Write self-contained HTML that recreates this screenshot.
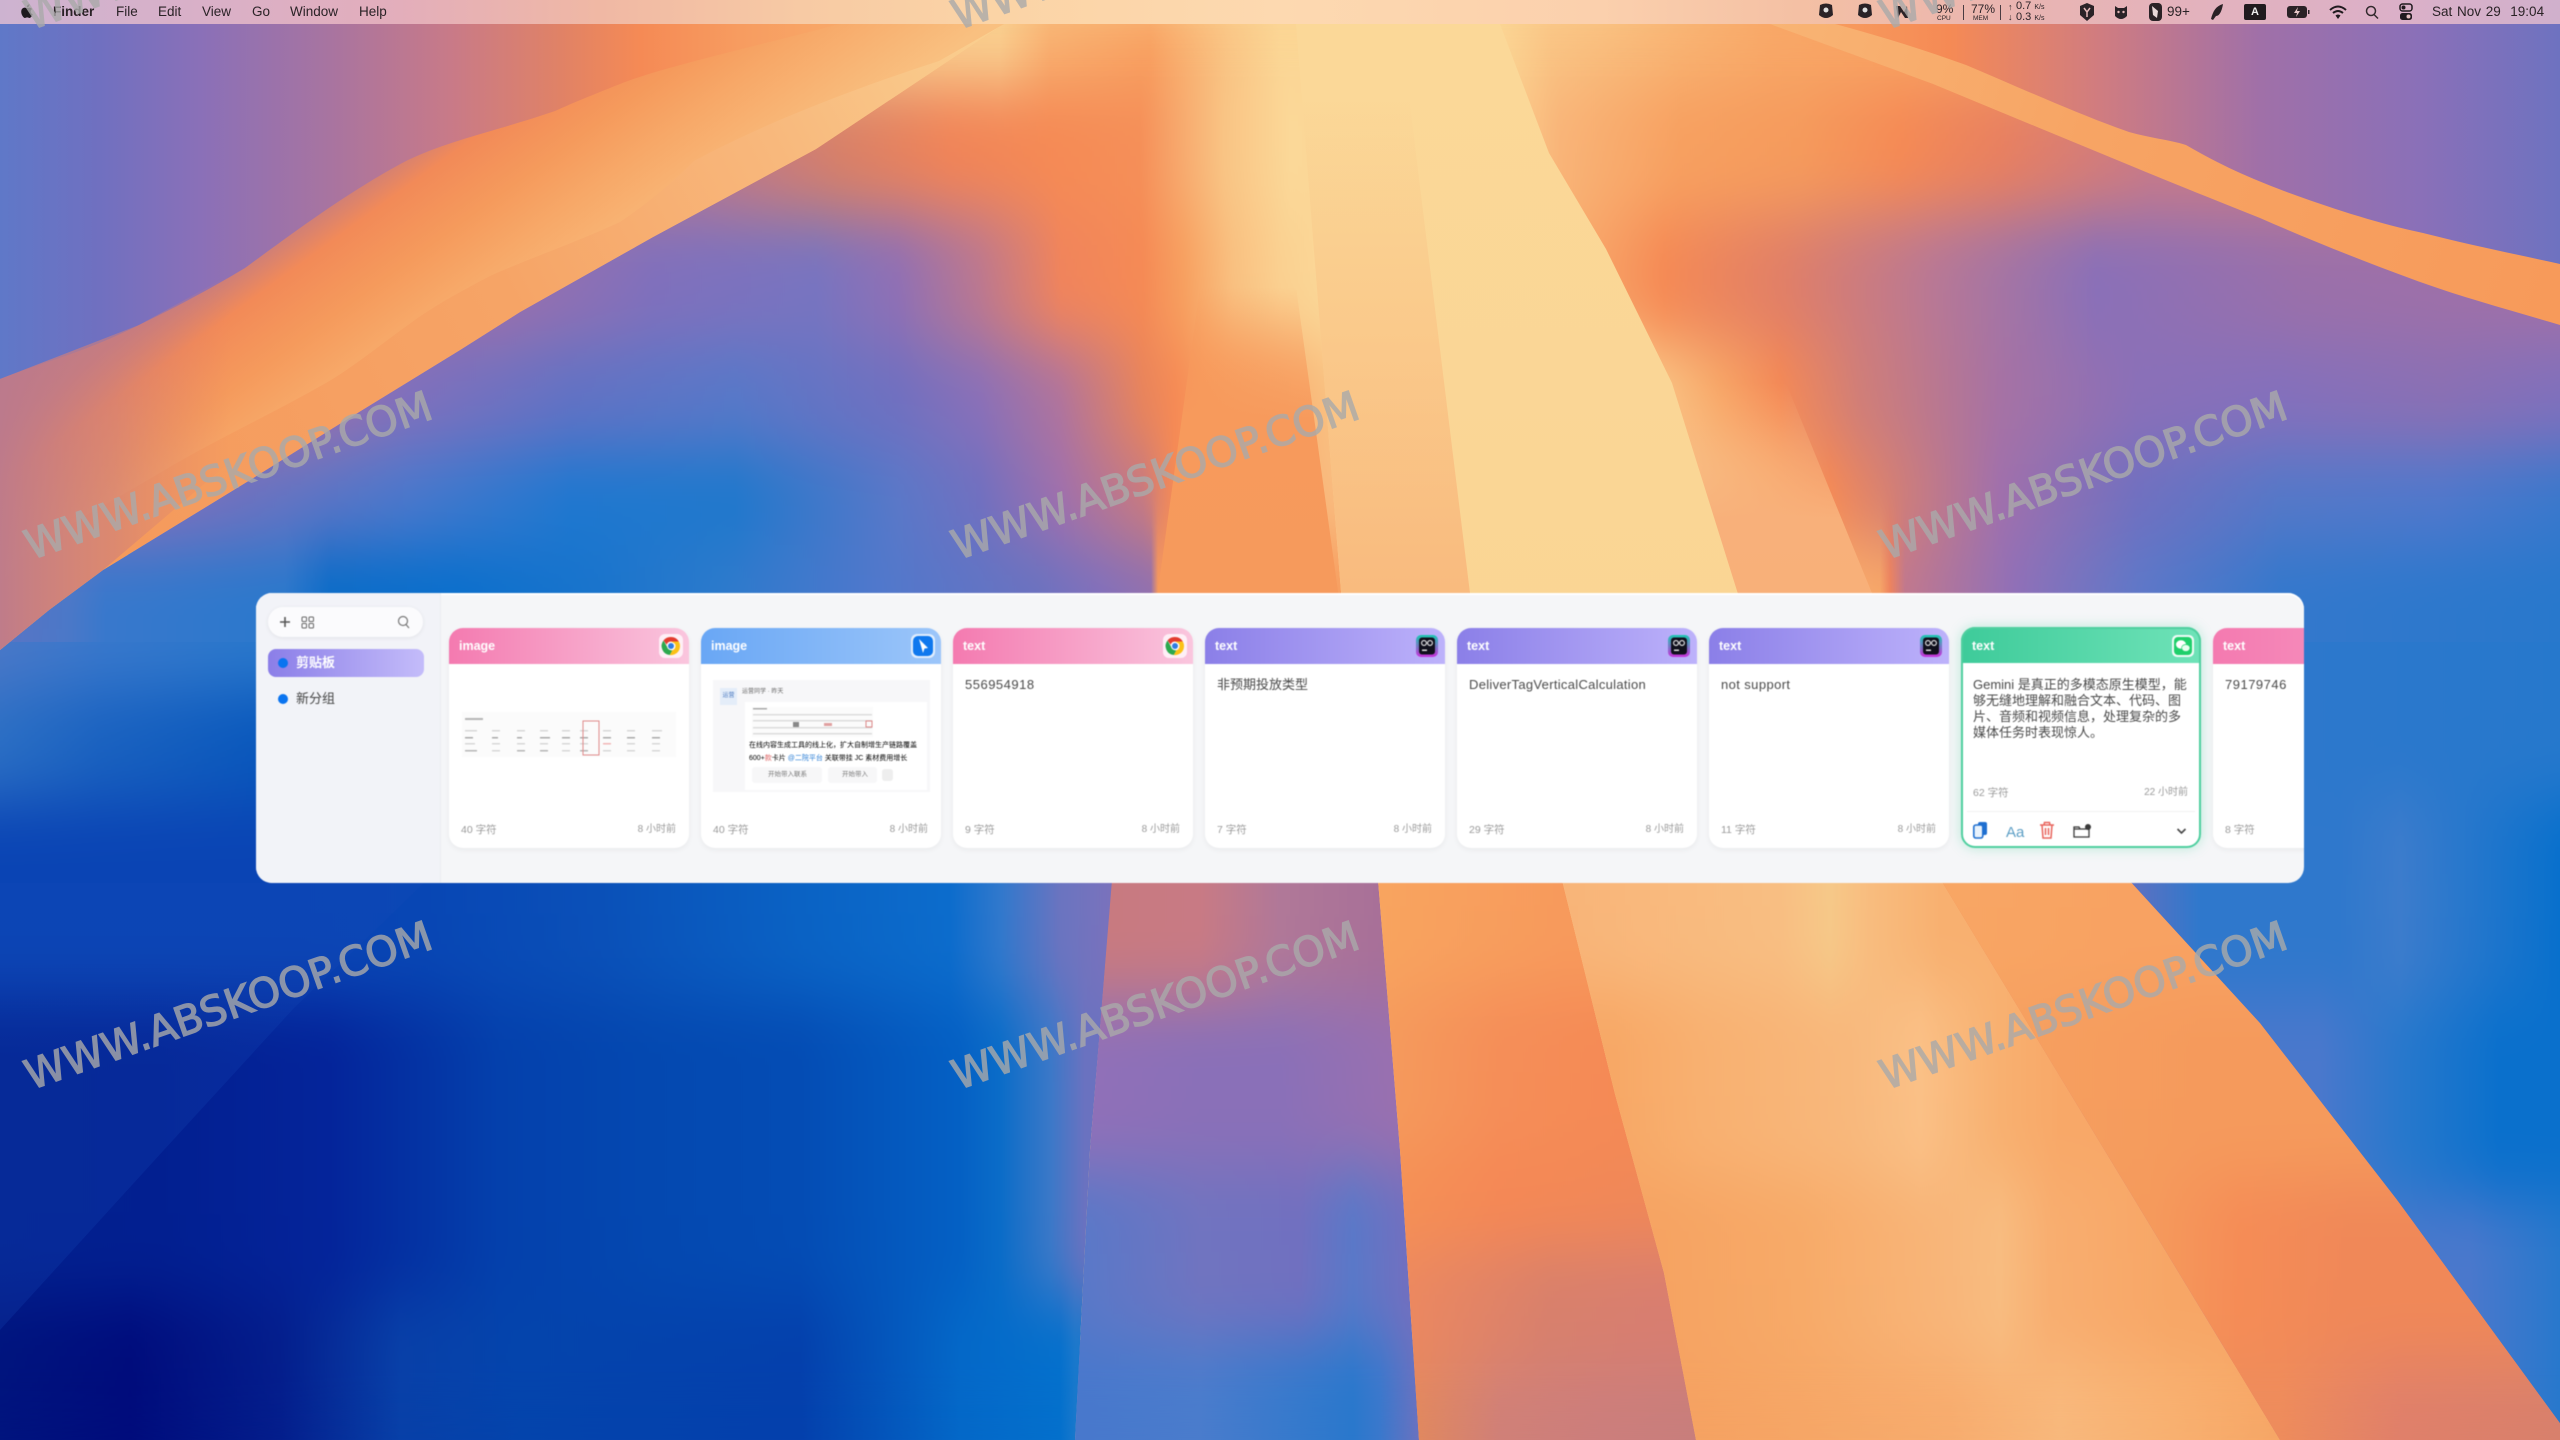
<!DOCTYPE html>
<html><head><meta charset="utf-8"><style>
*{box-sizing:border-box;margin:0;padding:0}
html,body{width:2560px;height:1440px;overflow:hidden;background:#0a50b8;font-family:"Liberation Sans","Noto Sans CJK SC",sans-serif}
#root{position:absolute;left:0;top:0;width:2560px;height:1440px;overflow:hidden}
.l{position:absolute;left:0;top:0;width:2560px;height:1440px;overflow:hidden}
.g{position:absolute;left:0;top:0;width:2560px;height:1440px}
.b1{filter:url(#vb)}
.r{position:absolute;left:0;width:2560px}
.panel{position:absolute;left:256px;top:593px;width:2048px;height:290px;background:#f5f6f8;border-radius:16px;overflow:hidden;box-shadow:inset 0 2px 0 #fff;filter:blur(.4px)}
.side{position:absolute;left:0;top:0;width:185px;height:290px;background:#f2f3f8;border-right:1px solid #eceef2}
.search{position:absolute;left:12px;top:14px;width:155px;height:30px;background:#fbfbfd;border-radius:15px;box-shadow:0 1px 5px rgba(0,0,0,.07)}
.sel{position:absolute;left:12px;top:56px;width:156px;height:28px;border-radius:8px;background:linear-gradient(90deg,#8b7ee8,#c4bcfa)}
.dot{position:absolute;width:10px;height:10px;border-radius:50%;background:#0a74f0}
.nm{position:absolute;left:40px;font-size:13px;line-height:16px}
.card{position:absolute;top:35px;width:240px;height:220px;background:#fff;border-radius:14px;box-shadow:0 2px 6px rgba(0,0,0,.05);overflow:hidden}
.hd{position:absolute;left:0;top:0;width:100%;height:36px;color:#fff;font-weight:bold;font-size:12.5px;line-height:37px;padding-left:10px}
.pk{background:linear-gradient(90deg,#f47ab0,#fac6de)}
.bl{background:linear-gradient(90deg,#69a7f5,#9cc6fa)}
.pu{background:linear-gradient(90deg,#8b7fe8,#bdb2fb)}
.gr{background:linear-gradient(90deg,#3ecb9a,#6fe3b8)}
.ic{position:absolute;left:210px;top:6px;width:24px;height:24px}
.tx{position:absolute;left:12px;top:49px;font-size:13px;line-height:16px;color:#4a4a4a;white-space:nowrap}
.fl,.fr{position:absolute;top:195px;font-size:10.5px;line-height:14px;color:#9a9a9a;white-space:nowrap}
.fl{left:12px}.fr{right:13px;font-size:10px}
.m{position:absolute;top:3px;font-size:13.5px;line-height:18px;color:#2a2226;white-space:nowrap;filter:blur(.35px)}
.mi{position:absolute;top:0;height:24px}
.s{position:absolute;color:#2a2226;white-space:nowrap}
</style></head><body>
<svg width="0" height="0" style="position:absolute"><defs>
<filter id="vb" x="0" y="-10%" width="100%" height="120%" color-interpolation-filters="sRGB"><feGaussianBlur stdDeviation="0 32"/></filter>
</defs></svg>
<div id="root">

<!-- sky -->
<div class="l" style="background:linear-gradient(90deg,#5f78c8 0,#7070c0 100px,#8a70b8 200px,#a874a0 330px,#c87a88 450px,#e08266 560px,#f58a55 640px,#f79c60 740px,#f8a868 840px,#f9c888 1000px,#fad898 1200px,#fad090 1600px,#f8a060 1800px,#f58a55 1950px,#d07c80 2100px,#a070a8 2260px,#8a70b8 2420px,#6e72c0 2560px)"></div>

<!-- fan -->
<div class="l" style="clip-path:polygon(0 650px,49px 610px,103px 570px,250px 480px,333px 428px,460px 350px,520px 312px,653px 237px,816px 149px,1004px 24px,1770px 24px,1933px 84px,2129px 165px,2260px 218px,2423px 283px,2560px 325px,2560px 642px,0 642px)">
<div class="g b1">
<div class="r" style="top:0;height:85px;background:linear-gradient(90deg,#f9d090 1000px,#f8b070 1050px,#f8a060 1150px,#f9c484 1230px,#fbd594 1280px,#fbd594 1500px,#f9c484 1550px,#f8b070 1700px,#f8a868 1770px,#f8a060 2000px)"></div>
<div class="r" style="top:85px;height:130px;background:linear-gradient(90deg,#b87890 700px,#d88068 840px,#f08458 950px,#f58a55 1050px,#f58f58 1140px,#f9c484 1224px,#fbd898 1290px,#fad090 1500px,#f9b478 1560px,#f7a060 1680px,#f59a5c 1800px,#f58a55 1900px,#e88060 2000px,#c87a88 2150px)"></div>
<div class="r" style="top:215px;height:130px;background:linear-gradient(90deg,#9a70ac 500px,#8070bc 653px,#7874c0 816px,#9070b4 898px,#bc788f 980px,#f0845c 1061px,#f58a55 1143px,#f7a060 1184px,#f9c080 1233px,#fad090 1280px,#fbd898 1330px,#fad594 1500px,#f9b070 1560px,#f58a55 1664px,#e07f68 1786px,#b87895 1933px,#8a70b8 2096px,#9a70aa 2300px,#a070a8 2560px)"></div>
<div class="r" style="top:345px;height:105px;background:linear-gradient(90deg,#a070a8 300px,#8070bc 408px,#6272c4 571px,#5878c8 735px,#7070c0 898px,#8a70b8 980px,#b0749c 1061px,#e8845c 1143px,#f58a55 1175px,#f89a5c 1208px,#f8ae70 1280px,#f9c080 1330px,#fbd594 1480px,#fad090 1640px,#f8a868 1720px,#f58a55 1780px,#d07e78 1860px,#a672a4 2000px,#8a70b8 2137px,#8470bc 2280px,#8a70b4 2440px,#8070bc 2560px)"></div>
<div class="r" style="top:450px;height:95px;background:linear-gradient(90deg,#8070bc 150px,#6c72c0 245px,#4a78cc 408px,#1f78d0 571px,#1f78cc 735px,#5a78c8 898px,#7070c0 980px,#a070ac 1061px,#c87a80 1143px,#f58a55 1175px,#f89a5c 1208px,#f8ae70 1280px,#f9b87c 1320px,#fbd594 1480px,#fad090 1700px,#f8b070 1770px,#f58a55 1830px,#d07e78 1900px,#a070ac 2000px,#7070c0 2137px,#5578c8 2280px,#5078cc 2440px,#3a78cc 2560px)"></div>
<div class="r" style="top:545px;height:250px;background:linear-gradient(90deg,#5a74c4 0,#4a78c8 70px,#3878cc 106px,#2a78cc 285px,#0a6cc8 330px,#0a6fcc 457px,#1a74cc 600px,#2c7acc 718px,#5078cc 880px,#6a72c0 1037px,#8070bc 1100px,#9070b0 1151px,#f79a5c 1158px,#f69a5c 1280px,#f79e60 1345px,#f9b87c 1350px,#f9c080 1476px,#fbd594 1480px,#fbd594 1753px,#f8b87c 1760px,#f8a868 1880px,#f0845c 1890px,#c0788f 1905px,#8f70b8 2015px,#5f78c8 2137px,#3478cc 2280px,#2878cc 2560px)"></div>
</div></div>

<!-- crisp centre strips -->
<div class="l" style="clip-path:polygon(1151px 642px,1158px 590px,1200px 287px,1296px 287px,1345px 642px);background:linear-gradient(180deg,rgba(247,154,92,0) 287px,#f79a5c 420px,#f69a5c 642px)"></div>
<div class="l" style="clip-path:polygon(1296px 24px,1345px 642px,1753px 642px,1672px 383px,1606px 249px,1549px 153px,1500px 24px);background:linear-gradient(180deg,#fbd898 24px,#fad594 642px)"></div>
<div class="l" style="clip-path:polygon(1296px 24px,1345px 642px,1476px 642px,1400px 24px);background:linear-gradient(180deg,rgba(249,184,124,0) 100px,#f9b87c 642px)"></div>
<div class="l" style="clip-path:polygon(1672px 383px,1753px 642px,1892px 642px,1786px 383px);background:linear-gradient(180deg,rgba(248,168,104,0) 383px,#f8b07a 520px,#f8b078 642px)"></div>

<!-- bottom left blue -->
<div class="l" style="clip-path:polygon(0 642px,1151px 642px,1112px 885px,1090px 1150px,1075px 1440px,0 1440px)">
<div class="r" style="top:1340px;height:100px;background:linear-gradient(90deg,#00147e 0,#000c7c 130px,#041e8c 280px,#0840a8 400px,#0444ac 520px,#0440ac 800px,#0468c8 960px,#0470cc 1060px,#1878cc 1075px)"></div>
<div class="g b1">
<div class="r" style="top:500px;height:190px;background:linear-gradient(90deg,#4a78c8 0,#3878cc 106px,#2a78cc 256px,#0a58bc 2560px)"></div>
<div class="r" style="top:690px;height:110px;background:linear-gradient(90deg,#2a6ec4 0,#1a62c0 100px,#0a58bc 256px,#0a58bc 2560px)"></div>
<div class="r" style="top:800px;height:200px;background:linear-gradient(90deg,#0a44b4 0,#0a44b4 300px,#0846b4 424px,#0a50b8 600px,#0a62c4 800px,#0c6ccc 950px,#3078cc 1000px,#6a74c0 1060px,#7a72bc 1112px)"></div>
<div class="r" style="top:1000px;height:300px;background:linear-gradient(90deg,#02208e 0,#021f90 160px,#04249a 330px,#0440ac 500px,#0448b0 650px,#044cb4 800px,#0460c4 960px,#0a6cc8 1000px,#3a78c8 1050px,#6a72c0 1085px)"></div>
<div class="r" style="top:1300px;height:140px;background:linear-gradient(90deg,#00147e 0,#000c7c 130px,#041e8c 280px,#0840a8 400px,#0444ac 520px,#0440ac 800px,#0468c8 960px,#0470cc 1060px,#1878cc 1075px)"></div>
</div></div>
<!-- faint diagonal lighter wedge bottom-left -->
<div class="l" style="clip-path:polygon(0 883px,424px 883px,294px 1008px,163px 1151px,0 1330px);background:linear-gradient(180deg,rgba(20,80,190,.2),rgba(20,70,180,.25))"></div>

<!-- pink band -->
<div class="l" style="clip-path:polygon(1112px 880px,1378px 880px,1400px 1150px,1419px 1440px,1075px 1440px,1090px 1150px)">
<div class="r" style="top:1340px;height:100px;background:linear-gradient(90deg,#4878cc 1075px,#4a7ccc 1200px,#2a78cc 1353px,#3a78cc 1380px,#6a72c0 1419px)"></div>
<div class="g b1">
<div class="r" style="top:760px;height:240px;background:linear-gradient(90deg,#c87a80 1112px,#c87a84 1200px,#b07898 1280px,#a87098 1378px)"></div>
<div class="r" style="top:1000px;height:170px;background:linear-gradient(90deg,#9070b8 1090px,#8a70b8 1200px,#8a70b8 1280px,#9870b0 1390px)"></div>
<div class="r" style="top:1170px;height:170px;background:linear-gradient(90deg,#5a78c8 1085px,#7074c0 1200px,#7070c0 1300px,#5a78c8 1353px,#7070c0 1405px)"></div>
<div class="r" style="top:1340px;height:100px;background:linear-gradient(90deg,#4878cc 1075px,#4a7ccc 1200px,#2a78cc 1353px,#3a78cc 1380px,#6a72c0 1419px)"></div>
</div></div>

<!-- orange band -->
<div class="l" style="clip-path:polygon(1378px 880px,1562px 880px,1615px 1094px,1664px 1273px,1696px 1440px,1419px 1440px,1400px 1150px)">
<div class="r" style="top:1370px;height:70px;background:linear-gradient(90deg,#e08860 1419px,#d08078 1500px,#cc7e7c 1600px,#c87e7c 1696px)"></div>
<div class="g b1">
<div class="r" style="top:760px;height:230px;background:linear-gradient(90deg,#f8a45f 1378px,#f79a5c 1562px)"></div>
<div class="r" style="top:990px;height:160px;background:linear-gradient(90deg,#f59a5c 1390px,#f58e58 1500px,#f58a55 1615px)"></div>
<div class="r" style="top:1150px;height:100px;background:linear-gradient(90deg,#f59055 1400px,#f58855 1500px,#f08858 1640px)"></div>
<div class="r" style="top:1250px;height:120px;background:linear-gradient(90deg,#ec8860 1405px,#d8806c 1550px,#d87e70 1660px)"></div>
<div class="r" style="top:1370px;height:70px;background:linear-gradient(90deg,#e08860 1419px,#d08078 1500px,#cc7e7c 1600px,#c87e7c 1696px)"></div>
</div></div>

<!-- peach band -->
<div class="l" style="clip-path:polygon(1562px 880px,1941px 880px,2280px 1440px,1696px 1440px,1664px 1273px,1615px 1094px)">
<div class="r" style="top:1360px;height:80px;background:linear-gradient(90deg,#f5a262 1696px,#f6a666 1800px,#f7ac6e 1950px,#f8b87c 2060px,#f8b070 2175px,#f6a666 2280px)"></div>
<div class="g b1">
<div class="r" style="top:760px;height:230px;background:linear-gradient(90deg,#f8b478 1562px,#f9b87c 1640px,#f8be82 1780px,#f6c888 1830px,#f8bc7e 1870px,#f8b070 1941px)"></div>
<div class="r" style="top:990px;height:190px;background:linear-gradient(90deg,#f7a866 1615px,#f8b070 1700px,#f8b87c 1850px,#fac086 1920px,#f8b070 2000px,#f8a868 2060px)"></div>
<div class="r" style="top:1180px;height:180px;background:linear-gradient(90deg,#f6a362 1664px,#f7aa68 1800px,#f8b67a 1950px,#f8bc80 2000px,#f8ae70 2050px,#f7a666 2170px)"></div>
<div class="r" style="top:1360px;height:80px;background:linear-gradient(90deg,#f5a262 1696px,#f6a666 1800px,#f7ac6e 1950px,#f8b87c 2060px,#f8b070 2175px,#f6a666 2280px)"></div>
</div></div>

<!-- orange 3 -->
<div class="l" style="clip-path:polygon(1941px 880px,2129px 880px,2260px 1023px,2398px 1201px,2560px 1423px,2560px 1440px,2280px 1440px)">
<div class="r" style="top:1360px;height:80px;background:linear-gradient(90deg,#ee8c5c 2280px,#e0806a 2400px,#d8806c 2560px)"></div>
<div class="g b1">
<div class="r" style="top:760px;height:230px;background:linear-gradient(90deg,#f8a664 1941px,#f8a262 2129px)"></div>
<div class="r" style="top:990px;height:190px;background:linear-gradient(90deg,#f6a060 2000px,#f59a5c 2200px)"></div>
<div class="r" style="top:1180px;height:180px;background:linear-gradient(90deg,#f59a5c 2150px,#f58c56 2240px,#f08858 2350px)"></div>
<div class="r" style="top:1360px;height:80px;background:linear-gradient(90deg,#ee8c5c 2280px,#e0806a 2400px,#d8806c 2560px)"></div>
</div></div>

<!-- right blue -->
<div class="l" style="clip-path:polygon(2000px 642px,2560px 642px,2560px 1423px,2398px 1201px,2260px 1023px,2129px 880px,2000px 700px)">
<div class="r" style="top:1200px;height:240px;background:linear-gradient(90deg,#4a78cc 2470px,#2878cc 2560px)"></div>
<div class="g b1">
<div class="r" style="top:500px;height:300px;background:linear-gradient(90deg,#2d78cc 2304px,#2678cc 2560px)"></div>
<div class="r" style="top:800px;height:200px;background:linear-gradient(90deg,#6070c0 2129px,#2f78cc 2200px,#2f78cc 2340px,#3c7ccc 2400px,#0870cc 2560px)"></div>
<div class="r" style="top:1000px;height:200px;background:linear-gradient(90deg,#4a78cc 2320px,#2878cc 2400px,#0a70cc 2500px,#0a70cc 2560px)"></div>
<div class="r" style="top:1200px;height:240px;background:linear-gradient(90deg,#4a78cc 2470px,#2878cc 2560px)"></div>
</div></div>

<!-- ridge and ribbon -->
<svg class="l" viewBox="0 0 2560 1440">
<defs>
<linearGradient id="a1" gradientUnits="userSpaceOnUse" x1="180" y1="247" x2="354" y2="486">
<stop offset="0" stop-color="#a87598"/><stop offset=".136" stop-color="#c07a84"/><stop offset=".288" stop-color="#f28a58"/><stop offset=".49" stop-color="#f59a5c"/><stop offset=".66" stop-color="#f7a868"/><stop offset="1" stop-color="#f9c080"/>
</linearGradient>
<linearGradient id="a2" gradientUnits="userSpaceOnUse" x1="100" y1="500" x2="1000" y2="30">
<stop offset="0" stop-color="#f59a5c"/><stop offset=".45" stop-color="#f6a466"/><stop offset=".75" stop-color="#f8b87c"/><stop offset="1" stop-color="#fad090"/>
</linearGradient>
<linearGradient id="rb" gradientUnits="userSpaceOnUse" x1="1770" y1="24" x2="2560" y2="300">
<stop offset="0" stop-color="#f8b474"/><stop offset=".4" stop-color="#f7a464"/><stop offset="1" stop-color="#f79a5a"/>
</linearGradient>
<linearGradient id="lf" gradientUnits="userSpaceOnUse" x1="0" y1="0" x2="230" y2="0">
<stop offset="0" stop-color="#bc7a8c" stop-opacity=".95"/><stop offset=".5" stop-color="#cc7e7c" stop-opacity=".6"/><stop offset="1" stop-color="#e08068" stop-opacity="0"/>
</linearGradient>
</defs>
<path fill="url(#a1)" d="M840 24 C740 50 660 68 620 84 C590 96 575 102 555 111 C500 130 450 140 408 160 C350 190 290 235 245 268 C205 292 170 310 139 325 C90 350 45 362 0 379 L0 650 L49 610 L103 570 L250 480 L333 428 L460 350 L520 312 L653 237 L816 149 L1004 24Z"/>
<path fill="url(#a2)" d="M1004 24 L939 61 C850 90 760 125 694 161 C670 185 645 205 620 222 C570 245 530 258 490 276 C460 292 435 305 408 325 C380 345 352 368 326 383 C270 415 215 440 163 471 C115 500 65 525 24 555 L0 585 L0 650 L49 610 L103 570 L250 480 L333 428 L460 350 L520 312 L653 237 L816 149 Z"/>
<path fill="url(#lf)" d="M0 379 L139 325 L230 275 L230 462 L103 570 L49 610 L0 650Z"/>
<path fill="url(#rb)" d="M1770 24 L1835 24 C1880 36 1925 50 1966 65 C2025 90 2080 115 2129 132 C2150 138 2170 140 2186 145 C2220 165 2250 178 2284 191 C2330 208 2380 224 2423 233 C2470 245 2515 254 2560 264 L2560 325 C2510 310 2465 298 2423 283 C2365 262 2310 240 2260 218 C2215 200 2170 182 2129 165 L1933 84Z"/>
</svg>

<!-- menu bar -->
<div class="l" style="height:24px;background:linear-gradient(90deg,#cdb3d0 0,#d9b0c8 200px,#e3aebb 400px,#f0b8a4 600px,#f7caa4 800px,#fbd4a6 1000px,#fdd9b0 1280px,#fbd0ad 1600px,#f4c0a4 1800px,#eab5b0 2000px,#e3b2bd 2200px,#dbb0c8 2400px,#d0b0cc 2560px)"></div>
<svg class="mi" style="left:18px;width:18px" viewBox="0 0 18 24"><path fill="#1e1a1e" d="M12.6 11.6c0-1.7 1.4-2.5 1.5-2.6-.8-1.2-2.1-1.3-2.5-1.4-1.1-.1-2.1.6-2.6.6s-1.400-.6-2.300-.6c-1.200 0-2.300.7-2.900 1.700-1.200 2.100-.3 5.300.9 7 .6.8 1.300 1.800 2.200 1.700.9 0 1.200-.6 2.300-.6s1.400.6 2.300.6c1 0 1.600-.9 2.200-1.700.7-1 1-1.900 1-2-.1 0-2-.8-2.100-2.700zM10.800 6.500c.5-.6.800-1.400.7-2.200-.7 0-1.500.5-2 1-.4.5-.8 1.300-.7 2.100.8.100 1.500-.4 2-.9z"/></svg>
<div class="m" style="left:53px;font-weight:bold">Finder</div>
<div class="m" style="left:116px">File</div>
<div class="m" style="left:158px">Edit</div>
<div class="m" style="left:202px">View</div>
<div class="m" style="left:252px">Go</div>
<div class="m" style="left:290px">Window</div>
<div class="m" style="left:359px">Help</div>

<svg class="mi" style="left:1815px;width:100px" viewBox="0 0 100 24">
<path fill="#2a2226" d="M5 5q6-3 12 0l1 10q-7 6-14 0z"/><circle cx="11" cy="10" r="2.500" fill="#ddd"/>
<path fill="#2a2226" d="M44 5q6-3 12 0l1 10q-7 6-14 0z"/><circle cx="50" cy="10" r="2.500" fill="#ddd"/>
<path fill="#2a2226" d="M81 6l4 0 4 6 3-6 1 12-3 0-4-6-3 6z"/>
</svg>
<div class="s" style="left:1936px;top:3px;font-size:12px;line-height:12px">9%</div>
<div class="s" style="left:1937px;top:15px;font-size:6.500px;line-height:8px">CPU</div>
<div class="mi" style="left:1963px;top:5px;height:15px;width:1px;background:#4a3c42"></div>
<div class="s" style="left:1971px;top:3px;font-size:12px;line-height:12px">77%</div>
<div class="s" style="left:1973px;top:15px;font-size:6.500px;line-height:8px">MEM</div>
<div class="mi" style="left:2000px;top:5px;height:15px;width:1px;background:#4a3c42"></div>
<div class="s" style="left:2008px;top:2px;font-size:9px;line-height:10px">↑</div>
<div class="s" style="left:2008px;top:12px;font-size:9px;line-height:10px">↓</div>
<div class="s" style="left:2016px;top:1px;font-size:11px;line-height:11px">0.7 <span style="font-size:7px">K/s</span></div>
<div class="s" style="left:2016px;top:12px;font-size:11px;line-height:11px">0.3 <span style="font-size:7px">K/s</span></div>

<svg class="mi" style="left:2075px;width:130px" viewBox="0 0 130 24">
<path fill="#2a2226" d="M12 3l7 3v9l-7 6-7-6V6z"/><path fill="none" stroke="#e5b8b8" stroke-width="1.500" d="M9 8l3 4 3-4M12 12v5"/>
<path fill="#2a2226" d="M40 6l3 2h6l3-2v10q-6 6-12 0z"/><circle cx="43.500" cy="12" r="1.200" fill="#e5b8b8"/><circle cx="48.500" cy="12" r="1.200" fill="#e5b8b8"/>
<rect x="74" y="3" width="13" height="18" rx="4" fill="#2a2226"/><path fill="#e8d8d8" d="M77 6l6 5-1 7-4-3z"/>
</svg>
<div class="s" style="left:2167px;top:3px;font-size:13.500px;line-height:18px">99+</div>
<svg class="mi" style="left:2207px;width:20px" viewBox="0 0 20 24"><path fill="#2a2226" d="M16 4C9 6 6 11 4 19l2 1 3-4c4 0 6-6 7-12z"/></svg>
<div class="s" style="left:2244px;top:4px;width:22px;height:16px;background:#201a1e;border-radius:2px;color:#eee;font-size:11px;line-height:16px;text-align:center;font-weight:bold">A</div>
<svg class="mi" style="left:2285px;width:26px" viewBox="0 0 26 24"><rect x="2" y="6" width="20" height="12" rx="3" fill="#2a2226"/><rect x="23" y="10" width="1.500" height="4" fill="#2a2226"/><path fill="#e8c8c8" d="M13 7l-4 6h3l-1 4 4-6h-3z"/></svg>
<svg class="mi" style="left:2328px;width:20px" viewBox="0 0 20 24"><path fill="none" stroke="#201a1e" stroke-width="2" d="M2 10q8-7 16 0M5 13q5-4 10 0"/><path fill="#201a1e" d="M7.500 15.500q2.500-2 5 0L10 19z"/></svg>
<svg class="mi" style="left:2364px;width:16px" viewBox="0 0 16 24"><circle cx="7" cy="11" r="4.500" fill="none" stroke="#332a2e" stroke-width="1.500"/><path stroke="#332a2e" stroke-width="1.500" d="M10 14.500l4 4"/></svg>
<svg class="mi" style="left:2398px;width:16px" viewBox="0 0 16 24"><rect x="2" y="4" width="12" height="7" rx="2.500" fill="none" stroke="#201a1e" stroke-width="1.500"/><circle cx="5.500" cy="7.500" r="2" fill="#201a1e"/><rect x="2" y="13" width="12" height="7" rx="2.500" fill="#201a1e"/><circle cx="10.500" cy="16.500" r="2" fill="#e5c0c0"/></svg>
<div class="m" style="left:2432px;word-spacing:1px">Sat Nov 29&nbsp; 19:04</div>

<!-- watermarks -->
<svg class="l" viewBox="0 0 2560 1440" style="font-family:'DejaVu Sans',sans-serif;font-size:41px;fill:#aaa;stroke:#aaa;stroke-width:1.300;opacity:.8">
<text transform="translate(31 30) rotate(-19.400)">WWW.ABSKOOP.COM</text>
<text transform="translate(958 30) rotate(-19.400)">WWW.ABSKOOP.COM</text>
<text transform="translate(1886 30) rotate(-19.400)">WWW.ABSKOOP.COM</text>
<text transform="translate(31 560) rotate(-19.400)">WWW.ABSKOOP.COM</text>
<text transform="translate(958 560) rotate(-19.400)">WWW.ABSKOOP.COM</text>
<text transform="translate(1886 560) rotate(-19.400)">WWW.ABSKOOP.COM</text>
<text transform="translate(31 1090) rotate(-19.400)">WWW.ABSKOOP.COM</text>
<text transform="translate(958 1090) rotate(-19.400)">WWW.ABSKOOP.COM</text>
<text transform="translate(1886 1090) rotate(-19.400)">WWW.ABSKOOP.COM</text>
</svg>

<!-- panel -->
<div class="panel">
<div class="side">
<div class="search"></div>
<svg style="position:absolute;left:20px;top:20px" width="140" height="18" viewBox="0 0 140 18">
<path stroke="#555" stroke-width="1.600" d="M9 4v10M4 9h10"/>
<g fill="none" stroke="#666" stroke-width="1"><rect x="26" y="4" width="4.500" height="4.500" rx="1"/><rect x="33" y="4" width="4.500" height="4.500" rx="1"/><rect x="26" y="10.500" width="4.500" height="4.500" rx="1"/><rect x="33" y="10.500" width="4.500" height="4.500" rx="1"/></g>
<circle cx="127" cy="8" r="4.500" fill="none" stroke="#777" stroke-width="1.200"/><path stroke="#777" stroke-width="1.200" d="M130 11.500l3 3.500"/>
</svg>
<div class="sel"></div>
<div class="dot" style="left:22px;top:65px"></div>
<div class="nm" style="top:62px;color:#fff;font-weight:bold">剪贴板</div>
<div class="dot" style="left:22px;top:101px"></div>
<div class="nm" style="top:98px;color:#444">新分组</div>
</div>

<!-- card 1 -->
<div class="card" style="left:193px">
<div class="hd pk">image</div>
<svg class="ic" viewBox="0 0 24 24"><rect width="24" height="24" rx="6" fill="#fff" fill-opacity=".75"/><path fill="#e33b2e" d="M12 3a9 9 0 0 1 7.800 4.500H12a4.500 4.500 0 0 0-4.300 3.100L4.500 6.500A9 9 0 0 1 12 3z"/><path fill="#2da94f" d="M4.500 6.500l3.900 6.700a4.500 4.500 0 0 0 5 3.100L10.800 21A9 9 0 0 1 4.500 6.500z"/><path fill="#fbc116" d="M19.800 7.500A9 9 0 0 1 10.800 21l2.600-4.700A4.500 4.500 0 0 0 15.900 9.700L12 7.500z"/><circle cx="12" cy="12" r="4" fill="#fff"/><circle cx="12" cy="12" r="3" fill="#2f7de1"/></svg>
<svg style="position:absolute;left:13px;top:84px" width="214" height="45" viewBox="0 0 214 45">
<rect width="214" height="45" fill="#fbfbfb"/>
<g opacity=".7">
<rect x="3" y="6" width="18" height="2" fill="#999"/>
<g fill="#c9c9c9"><rect x="3" y="18" width="12" height="1.500"/><rect x="3" y="25" width="8" height="1.500" fill="#888"/><rect x="3" y="31" width="10" height="1.500"/><rect x="3" y="38" width="12" height="1.500" fill="#999"/>
<rect x="30" y="18" width="8" height="1.500"/><rect x="30" y="25" width="6" height="1.500" fill="#888"/><rect x="30" y="31" width="8" height="1.500"/><rect x="30" y="38" width="8" height="1.500"/>
<rect x="55" y="18" width="8" height="1.500"/><rect x="55" y="25" width="5" height="1.500" fill="#888"/><rect x="55" y="31" width="8" height="1.500"/><rect x="55" y="38" width="8" height="1.500" fill="#999"/>
<rect x="78" y="18" width="8" height="1.500"/><rect x="78" y="25" width="10" height="1.500" fill="#888"/><rect x="78" y="31" width="8" height="1.500"/><rect x="78" y="38" width="8" height="1.500" fill="#999"/>
<rect x="100" y="18" width="8" height="1.500"/><rect x="100" y="25" width="8" height="1.500" fill="#888"/><rect x="100" y="31" width="8" height="1.500"/><rect x="100" y="38" width="8" height="1.500"/>
<rect x="118" y="18" width="8" height="1.500"/><rect x="118" y="25" width="8" height="1.500" fill="#888"/><rect x="118" y="31" width="8" height="1.500"/><rect x="118" y="38" width="8" height="1.500" fill="#999"/>
<rect x="141" y="18" width="8" height="1.500"/><rect x="141" y="25" width="8" height="1.500" fill="#888"/><rect x="141" y="31" width="8" height="1.500" fill="#e99"/><rect x="141" y="38" width="8" height="1.500"/>
<rect x="165" y="18" width="8" height="1.500"/><rect x="165" y="25" width="8" height="1.500" fill="#888"/><rect x="165" y="31" width="8" height="1.500"/><rect x="165" y="38" width="8" height="1.500"/>
<rect x="190" y="18" width="10" height="1.500"/><rect x="190" y="25" width="8" height="1.500" fill="#888"/><rect x="190" y="31" width="8" height="1.500"/><rect x="190" y="38" width="8" height="1.500"/></g>
</g>
<rect x="121" y="9" width="16" height="34" fill="none" stroke="#e08a8a" stroke-width="1"/>
</svg>
<div class="fl">40 字符</div><div class="fr">8 小时前</div>
</div>

<!-- card 2 -->
<div class="card" style="left:445px">
<div class="hd bl">image</div>
<svg class="ic" viewBox="0 0 24 24"><rect width="24" height="24" rx="6" fill="#fff" fill-opacity=".7"/><rect x="2" y="2" width="20" height="20" rx="5" fill="#0f78ee"/><path fill="#fff" d="M8 5l9 9-3.500.5L12 19z"/></svg>
<div style="position:absolute;left:12px;top:52px;width:217px;height:112px;background:#f7f7f9"></div>
<div style="position:absolute;left:44px;top:74px;width:182px;height:88px;background:#fff"></div>
<div style="position:absolute;left:19px;top:60px;width:17px;height:17px;background:#e4edf9;color:#4a78c0;font-size:6px;line-height:17px;text-align:center">运营</div>
<div style="position:absolute;left:41px;top:60px;font-size:6px;line-height:8px;color:#666;white-space:nowrap">运营同学 · 昨天</div>
<svg style="position:absolute;left:51px;top:79px" width="121" height="30" viewBox="0 0 121 30"><rect width="121" height="30" fill="#fbfbfb"/><rect x="1" y="1" width="14" height="1.500" fill="#aaa"/><g fill="#ddd"><rect x="1" y="7" width="119" height="1.500"/><rect x="1" y="13" width="119" height="1.500"/><rect x="1" y="20" width="119" height="1.500"/><rect x="1" y="26" width="119" height="1.500"/></g><rect x="41" y="15" width="6" height="5" fill="#888"/><rect x="72" y="16" width="8" height="3" fill="#e0a0a0"/><rect x="114" y="14" width="6" height="6" fill="none" stroke="#d88" stroke-width="1"/></svg>
<div style="position:absolute;left:48px;top:112px;font-size:7px;line-height:12.500px;color:#000;white-space:nowrap">在线内容生成工具的线上化，扩大自制增生产链路覆盖<br>600+<span style="color:#d66">款</span>卡片 <span style="color:#2c7fd6">@二院平台</span> 关联带挂 JC 素材费用增长</div>
<div style="position:absolute;left:51px;top:139px;width:70px;height:16px;background:#f7f7f8;border-radius:3px;font-size:6.500px;line-height:16px;color:#777;padding-left:16px;white-space:nowrap">开始带入联系</div>
<div style="position:absolute;left:127px;top:139px;width:49px;height:16px;background:#f7f7f8;border-radius:3px;font-size:6.500px;line-height:16px;color:#777;padding-left:14px;white-space:nowrap">开始带入</div>
<div style="position:absolute;left:181px;top:141px;width:11px;height:12px;background:#eee;border-radius:3px"></div>
<div class="fl">40 字符</div><div class="fr">8 小时前</div>
</div>

<!-- card 3 -->
<div class="card" style="left:697px">
<div class="hd pk">text</div>
<svg class="ic" viewBox="0 0 24 24"><rect width="24" height="24" rx="6" fill="#fff" fill-opacity=".75"/><path fill="#e33b2e" d="M12 3a9 9 0 0 1 7.800 4.500H12a4.500 4.500 0 0 0-4.300 3.100L4.500 6.500A9 9 0 0 1 12 3z"/><path fill="#2da94f" d="M4.500 6.500l3.900 6.700a4.500 4.500 0 0 0 5 3.100L10.800 21A9 9 0 0 1 4.500 6.500z"/><path fill="#fbc116" d="M19.800 7.500A9 9 0 0 1 10.800 21l2.600-4.700A4.500 4.500 0 0 0 15.900 9.700L12 7.500z"/><circle cx="12" cy="12" r="4" fill="#fff"/><circle cx="12" cy="12" r="3" fill="#2f7de1"/></svg>
<div class="tx" style="letter-spacing:.5px">556954918</div>
<div class="fl">9 字符</div><div class="fr">8 小时前</div>
</div>

<!-- card 4 -->
<div class="card" style="left:949px">
<div class="hd pu">text</div>
<svg class="ic" viewBox="0 0 24 24"><defs><linearGradient id="jb" x1="0" y1="0" x2="0" y2="1"><stop offset="0" stop-color="#19c9b0"/><stop offset="1" stop-color="#c92fd8"/></linearGradient></defs><rect x="1" y="1" width="22" height="22" rx="5" fill="url(#jb)"/><rect x="4" y="3.500" width="16" height="17" rx="3" fill="#10101c"/><circle cx="9" cy="9" r="2.400" fill="none" stroke="#eee" stroke-width="1.100"/><circle cx="15" cy="9" r="2.400" fill="none" stroke="#eee" stroke-width="1.100"/><rect x="7" y="15.500" width="5" height="1.500" fill="#ddd"/></svg>
<div class="tx">非预期投放类型</div>
<div class="fl">7 字符</div><div class="fr">8 小时前</div>
</div>

<!-- card 5 -->
<div class="card" style="left:1201px">
<div class="hd pu">text</div>
<svg class="ic" viewBox="0 0 24 24"><rect x="1" y="1" width="22" height="22" rx="5" fill="url(#jb)"/><rect x="4" y="3.500" width="16" height="17" rx="3" fill="#10101c"/><circle cx="9" cy="9" r="2.400" fill="none" stroke="#eee" stroke-width="1.100"/><circle cx="15" cy="9" r="2.400" fill="none" stroke="#eee" stroke-width="1.100"/><rect x="7" y="15.500" width="5" height="1.500" fill="#ddd"/></svg>
<div class="tx" style="letter-spacing:.3px">DeliverTagVerticalCalculation</div>
<div class="fl">29 字符</div><div class="fr">8 小时前</div>
</div>

<!-- card 6 -->
<div class="card" style="left:1453px">
<div class="hd pu">text</div>
<svg class="ic" viewBox="0 0 24 24"><rect x="1" y="1" width="22" height="22" rx="5" fill="url(#jb)"/><rect x="4" y="3.500" width="16" height="17" rx="3" fill="#10101c"/><circle cx="9" cy="9" r="2.400" fill="none" stroke="#eee" stroke-width="1.100"/><circle cx="15" cy="9" r="2.400" fill="none" stroke="#eee" stroke-width="1.100"/><rect x="7" y="15.500" width="5" height="1.500" fill="#ddd"/></svg>
<div class="tx" style="letter-spacing:.4px">not support</div>
<div class="fl">11 字符</div><div class="fr">8 小时前</div>
</div>

<!-- card 7 selected -->
<div class="card" style="left:1705px;top:34px;width:240px;height:221px;overflow:visible;background:transparent;box-shadow:0 0 12px rgba(70,205,155,.35)">
<div style="position:absolute;inset:0;background:#fff;border-radius:14px;overflow:hidden">
<div class="hd gr" style="padding-left:11px;line-height:39px">text</div>
<svg class="ic" viewBox="0 0 24 24" style="top:7px"><rect x="1" y="1" width="22" height="22" rx="5" fill="#fff" fill-opacity=".9"/><rect x="3" y="3" width="18" height="18" rx="4" fill="#1fcf6b"/><ellipse cx="10" cy="10.500" rx="5" ry="4.200" fill="#fff"/><ellipse cx="14.800" cy="14" rx="4.200" ry="3.500" fill="#e8fff0" stroke="#1fcf6b" stroke-width=".7"/></svg>
<div class="tx" style="top:50px">Gemini 是真正的多模态原生模型，能<br>够无缝地理解和融合文本、代码、图<br>片、音频和视频信息，处理复杂的多<br>媒体任务时表现惊人。</div>
<div class="fl" style="top:159px">62 字符</div><div class="fr" style="top:159px">22 小时前</div>
<div style="position:absolute;left:6px;right:6px;top:184px;height:1px;background:#f1f1f2"></div>
<svg style="position:absolute;left:8px;top:188px" width="226" height="30" viewBox="0 0 226 30">
<rect x="9" y="7" width="9" height="13" rx="2" fill="#1f6fd0"/><rect x="4.800" y="10" width="9" height="13" rx="2" fill="#e8f2fc" stroke="#1f6fd0" stroke-width="1.600"/>
<text x="37" y="22" font-family="Liberation Sans" font-size="15" fill="#5a9dc4">Aa</text>
<path fill="none" stroke="#e8645c" stroke-width="1.500" d="M71 10h14M75 10l.5-2.500h5l.5 2.500M73 10l1 13h8l1-13M76.500 13v7M79.500 13v7"/>
<path fill="none" stroke="#3a3a3a" stroke-width="1.300" d="M105 12h5l1 2h9v8h-15zM105 14h6"/><circle cx="119" cy="12" r="3" fill="#3a3a3a"/>
<path fill="none" stroke="#444" stroke-width="1.600" d="M208.500 14l4 4 4-4"/>
</svg>
</div>
<div style="position:absolute;inset:0;border:2px solid #4fcf9f;border-radius:14px;pointer-events:none"></div>
</div>

<!-- card 8 -->
<div class="card" style="left:1957px">
<div class="hd" style="background:linear-gradient(90deg,#f47ab0,#f7a0c8 240px)">text</div>
<div class="tx" style="letter-spacing:.5px">79179746</div>
<div class="fl">8 字符</div>
</div>
</div>
</div>
</body></html>
